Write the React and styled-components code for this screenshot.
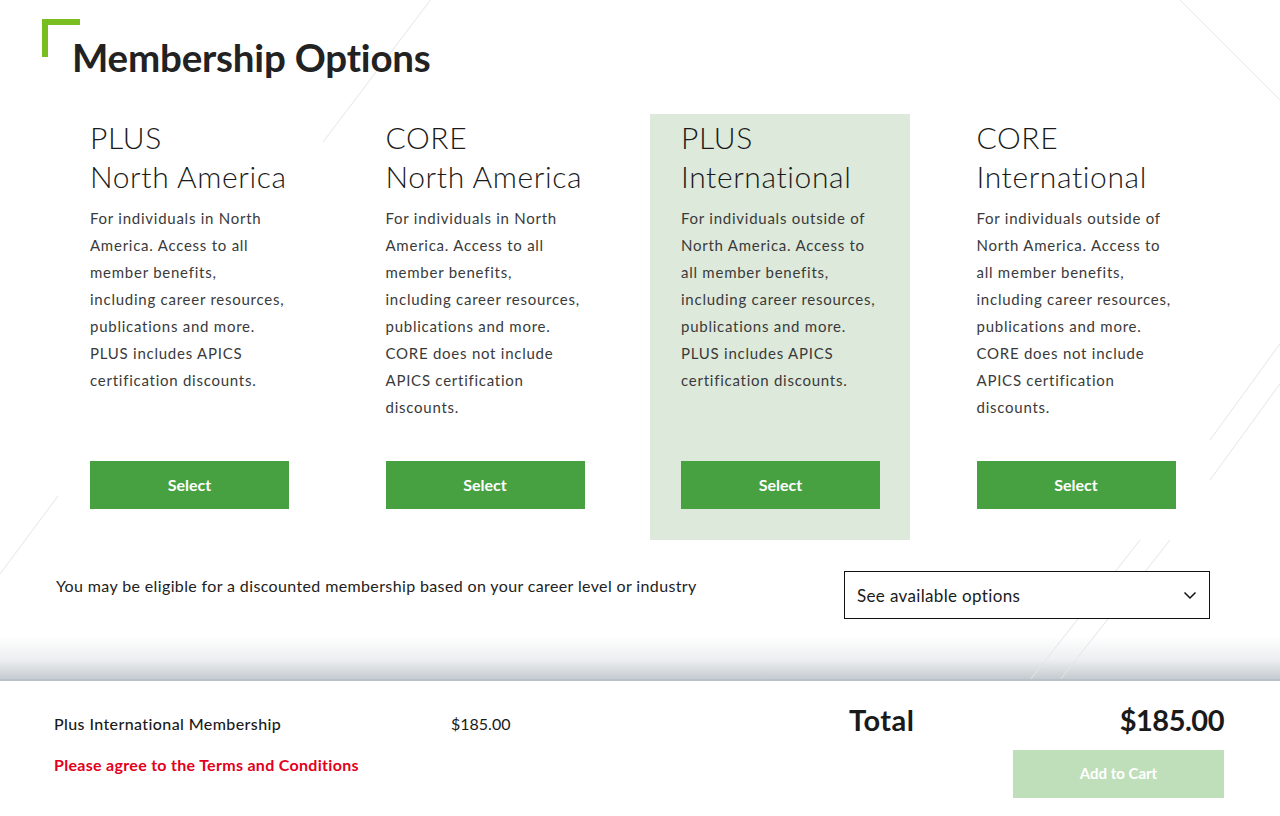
import React from "react"
import styled, { createGlobalStyle } from "styled-components"

const GlobalStyle = createGlobalStyle`
  html, body {
    margin: 0;
    padding: 0;
    background: #fff;
    font-family: Lato, "Open Sans", sans-serif;
    color: #222;
  }
`

const Page = styled.div`
  position: relative;
  width: 1280px;
  height: 816px;
  overflow: hidden;
  display: flex;
  flex-direction: column;
`

const Backdrop = styled.svg`
  position: absolute;
  inset: 0;
  z-index: -1;
  pointer-events: none;
`

const Main = styled.main`
  position: relative;
  z-index: 0;
  flex: 1;
  padding: 19px 0 0 42px;
  display: flex;
  flex-direction: column;
  background: linear-gradient(to bottom, #fff 0, #fff 636px, #eceef0 660px, #c5cbd0 679px);
`

const Title = styled.h1`
  position: relative;
  margin: 0;
  padding: 13px 0 0 30px;
  font-size: 38.5px;
  line-height: 50px;
  font-weight: 700;
  letter-spacing: -0.2px;
  color: #222;

  &::before {
    content: "";
    position: absolute;
    left: 0;
    top: 0;
    width: 32px;
    height: 32px;
    border-top: 6px solid #78be20;
    border-left: 6px solid #78be20;
  }
`

const Cards = styled.div`
  display: grid;
  grid-template-columns: repeat(4, 260px);
  column-gap: 35.5px;
  margin: 32px 0 0 17px;
`

const Card = styled.div`
  display: flex;
  flex-direction: column;
  height: 426px;
  box-sizing: border-box;
  padding: 4px 31px 31px;
  background: ${p => (p.active ? "#dde9da" : "transparent")};
`

const PlanName = styled.h2`
  margin: 0;
  font-size: 30px;
  line-height: 39px;
  font-weight: 300;
  letter-spacing: 0.6px;
  color: #1a1a1a;
`

const Blurb = styled.p`
  margin: 9px 0 0;
  font-size: 15px;
  line-height: 27px;
  font-weight: 400;
  letter-spacing: 0.75px;
  color: #3a3a3a;
`

const SelectButton = styled.button`
  margin-top: auto;
  width: 199px;
  height: 48px;
  padding-bottom: 3px;
  border: none;
  background: #47a140;
  color: #fff;
  font-family: inherit;
  font-size: 16px;
  font-weight: 700;
  cursor: pointer;
`

const DiscountRow = styled.div`
  display: flex;
  align-items: flex-start;
  justify-content: space-between;
  margin: 31px 0 0 14px;
  width: 1154px;
`

const DiscountText = styled.p`
  margin: 5px 0 0;
  font-size: 16px;
  letter-spacing: 0.37px;
  color: #222;
`

const Dropdown = styled.div`
  display: flex;
  align-items: center;
  justify-content: space-between;
  width: 366px;
  height: 48px;
  box-sizing: border-box;
  padding: 0 12px 0 12px;
  border: 1.5px solid #111;
  background: #fff;
  font-size: 17px;
  letter-spacing: 0.35px;
  color: #1a1a1a;
`

const Footer = styled.footer`
  height: 137px;
  box-sizing: border-box;
  border-top: 2px solid #b9c2c9;
  background: #fff;
  padding: 33px 56px 0 54px;
  display: flex;
  justify-content: space-between;
  position: relative;
`

const FooterLeft = styled.div`
  display: flex;
  flex-direction: column;
  gap: 22px;
`

const LineItem = styled.div`
  display: flex;
  font-size: 16px;
  font-weight: 500;
  letter-spacing: 0.4px;
  color: #1a1a1a;
`

const ItemName = styled.span`
  width: 397px;
`

const ItemPrice = styled.span`
  font-weight: 400;
  letter-spacing: 0;
`

const Warning = styled.div`
  font-size: 16px;
  font-weight: 700;
  letter-spacing: 0.3px;
  color: #e2001a;
`

const FooterRight = styled.div`
  width: 375px;
  display: flex;
  flex-direction: column;
  align-items: flex-end;
`

const TotalRow = styled.div`
  width: 100%;
  display: flex;
  justify-content: space-between;
  margin-top: -12px;
  font-size: 29px;
  font-weight: 700;
  color: #1a1a1a;
`

const TotalLabel = styled.span`
  letter-spacing: 0.5px;
`

const TotalAmount = styled.span`
  letter-spacing: -0.5px;
`

const CartButton = styled.button`
  margin-top: 13px;
  width: 211px;
  height: 48px;
  padding-bottom: 3px;
  border: none;
  background: #bfdfba;
  color: #fff;
  font-family: inherit;
  font-size: 15px;
  font-weight: 700;
`

const plans = [
  {
    tier: "PLUS",
    region: "North America",
    lines: ["For individuals in North", "America. Access to all", "member benefits,", "including career resources,", "publications and more.", "PLUS includes APICS", "certification discounts."],
  },
  {
    tier: "CORE",
    region: "North America",
    lines: ["For individuals in North", "America. Access to all", "member benefits,", "including career resources,", "publications and more.", "CORE does not include", "APICS certification", "discounts."],
  },
  {
    tier: "PLUS",
    region: "International",
    active: true,
    lines: ["For individuals outside of", "North America. Access to", "all member benefits,", "including career resources,", "publications and more.", "PLUS includes APICS", "certification discounts."],
  },
  {
    tier: "CORE",
    region: "International",
    lines: ["For individuals outside of", "North America. Access to", "all member benefits,", "including career resources,", "publications and more.", "CORE does not include", "APICS certification", "discounts."],
  },
]

const ChevronDown = () => (
  <svg width="14" height="9" viewBox="0 0 14 9" fill="none">
    <path d="M1.5 1.5 L7 7 L12.5 1.5" stroke="#111" strokeWidth="1.5" />
  </svg>
)

const App = () => (
  <>
    <GlobalStyle />
    <Page>
      <Main>
        <Backdrop width="1280" height="816" viewBox="0 0 1280 816">
          <g stroke="#e3e5e8" strokeWidth="1">
            <line x1="432" y1="-2" x2="323" y2="142" />
            <line x1="1180" y1="0" x2="1280" y2="100" />
            <line x1="1290" y1="330" x2="1210" y2="440" />
            <line x1="1290" y1="370" x2="1210" y2="480" />
            <line x1="1140" y1="540" x2="1030" y2="680" />
            <line x1="1170" y1="540" x2="1060" y2="680" />
            <line x1="58" y1="496" x2="0" y2="574" />
          </g>
        </Backdrop>
        <Title>Membership Options</Title>
        <Cards>
          {plans.map((p, i) => (
            <Card key={i} active={p.active}>
              <PlanName>
                {p.tier}
                <br />
                {p.region}
              </PlanName>
              <Blurb>
                {p.lines.map((l, j) => (
                  <React.Fragment key={j}>
                    {l}
                    <br />
                  </React.Fragment>
                ))}
              </Blurb>
              <SelectButton>Select</SelectButton>
            </Card>
          ))}
        </Cards>
        <DiscountRow>
          <DiscountText>
            You may be eligible for a discounted membership based on your career level or industry
          </DiscountText>
          <Dropdown>
            <span>See available options</span>
            <ChevronDown />
          </Dropdown>
        </DiscountRow>
      </Main>
      <Footer>
        <FooterLeft>
          <LineItem>
            <ItemName>Plus International Membership</ItemName>
            <ItemPrice>$185.00</ItemPrice>
          </LineItem>
          <Warning>Please agree to the Terms and Conditions</Warning>
        </FooterLeft>
        <FooterRight>
          <TotalRow>
            <TotalLabel>Total</TotalLabel>
            <TotalAmount>$185.00</TotalAmount>
          </TotalRow>
          <CartButton>Add to Cart</CartButton>
        </FooterRight>
      </Footer>
    </Page>
  </>
)

export default App
